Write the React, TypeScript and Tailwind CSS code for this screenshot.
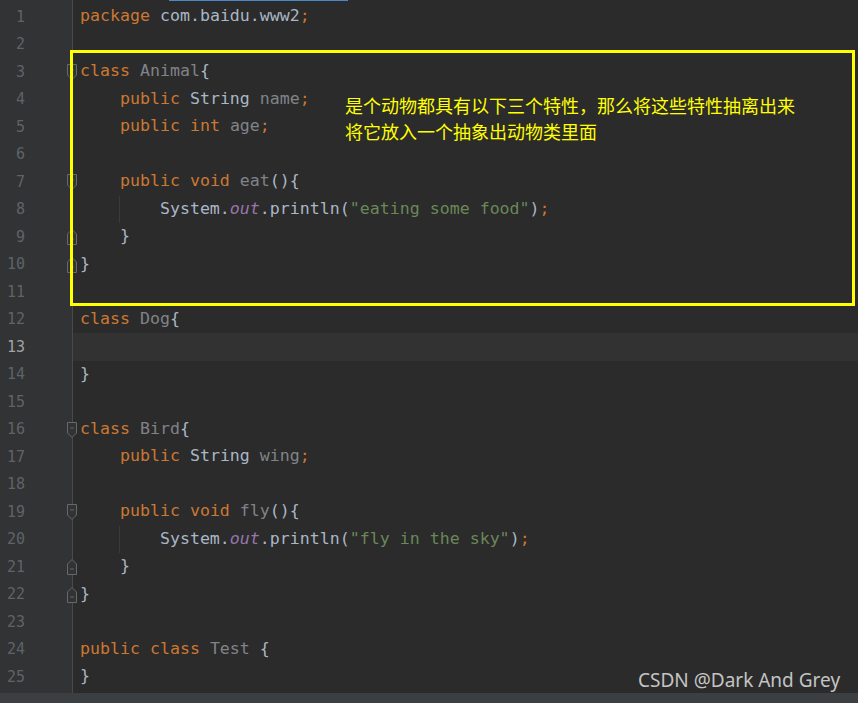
import React from "react";

type Tok = [string, string];

const K = "text-[#cc7832]";
const D = "text-[#a9b7c6]";
const G = "text-[#808389]";
const S = "text-[#6a8759]";
const P = "text-[#9876aa] italic";

interface Line {
  toks: Tok[];
  fold?: "open" | "close";
  guide?: boolean;
}

const lines: Line[] = [
  { toks: [[K, "package "], [D, "com.baidu.www2"], [K, ";"]] },
  { toks: [] },
  { toks: [[K, "class "], [G, "Animal"], [D, "{"]], fold: "open" },
  { toks: [[D, "    "], [K, "public "], [D, "String "], [G, "name"], [K, ";"]] },
  { toks: [[D, "    "], [K, "public int "], [G, "age"], [K, ";"]] },
  { toks: [] },
  { toks: [[D, "    "], [K, "public void "], [G, "eat"], [D, "(){"]], fold: "open" },
  {
    toks: [
      [D, "        System."],
      [P, "out"],
      [D, ".println("],
      [S, '"eating some food"'],
      [D, ")"],
      [K, ";"],
    ],
    guide: true,
  },
  { toks: [[D, "    }"]], fold: "close" },
  { toks: [[D, "}"]], fold: "close" },
  { toks: [] },
  { toks: [[K, "class "], [G, "Dog"], [D, "{"]] },
  { toks: [] },
  { toks: [[D, "}"]] },
  { toks: [] },
  { toks: [[K, "class "], [G, "Bird"], [D, "{"]], fold: "open" },
  { toks: [[D, "    "], [K, "public "], [D, "String "], [G, "wing"], [K, ";"]] },
  { toks: [] },
  { toks: [[D, "    "], [K, "public void "], [G, "fly"], [D, "(){"]], fold: "open" },
  {
    toks: [
      [D, "        System."],
      [P, "out"],
      [D, ".println("],
      [S, '"fly in the sky"'],
      [D, ")"],
      [K, ";"],
    ],
    guide: true,
  },
  { toks: [[D, "    }"]], fold: "close" },
  { toks: [[D, "}"]], fold: "close" },
  { toks: [] },
  { toks: [[K, "public class "], [G, "Test "], [D, "{"]] },
  { toks: [[D, "}"]] },
];

// gutter fold marker, drawn over the gutter border line
function FoldMark({ kind }: { kind: "open" | "close" }) {
  return (
    <svg
      width="12"
      height="18"
      viewBox="0 0 12 18"
      className="absolute left-[66px] top-[5px]"
    >
      {kind === "open" ? (
        <>
          <path d="M1.5 1.5H10.5V12L6 16.5L1.5 12Z" fill="#313335" stroke="#65686c" />
          <path d="M4 7H8" stroke="#65686c" />
        </>
      ) : (
        <>
          <path d="M1.5 16.5H10.5V6L6 1.5L1.5 6Z" fill="#313335" stroke="#65686c" />
          <path d="M4 11H8" stroke="#65686c" />
        </>
      )}
    </svg>
  );
}

export default function App() {
  const mono = { fontFamily: '"DejaVu Sans Mono", "Liberation Mono", monospace' };
  return (
    <div className="relative flex h-[703px] w-[858px] flex-col overflow-hidden bg-[#2b2b2b]">
      <div className="flex flex-1" style={mono}>
        <div className="w-[73px] shrink-0 border-r border-[#4a4a4a] bg-[#313335] pt-[3px]">
          {lines.map((line, i) => (
            <div key={i} className="relative flex h-[27.5px] items-center">
              <span
                className={`w-[25px] text-right text-[15px] ${i === 12 ? "text-[#a4a3a3]" : "text-[#606366]"}`}
              >
                {i + 1}
              </span>
              {line.fold && <FoldMark kind={line.fold} />}
            </div>
          ))}
        </div>
        <div className="flex-1 pt-[3px]">
          {lines.map((line, i) => (
            <div
              key={i}
              className={`flex h-[27.5px] items-center whitespace-pre pl-[7px] text-[16.6px] ${i === 12 ? "bg-[#323232]" : ""}`}
            >
              {line.guide && <span className="h-full w-px bg-[#3a3a3a] ml-[39px] -mr-[40px]" />}
              {line.toks.map(([c, t], j) => (
                <span key={j} className={c}>
                  {t}
                </span>
              ))}
            </div>
          ))}
        </div>
      </div>
      <div className="h-[10px] shrink-0 bg-[#3c3f41]" />

      <div className="absolute left-[169px] top-0 h-px w-[179px] bg-[#4a88c7]" />

      <div className="absolute left-[70px] top-[50px] h-[256px] w-[785px] border-[3px] border-[#ffff00]" />

      <div
        className="absolute left-[345px] top-[92px] text-[18px] leading-[26px] text-[#ffff00]"
        style={{ fontFamily: '"Noto Sans CJK SC", "Noto Sans", sans-serif' }}
      >
        <div>是个动物都具有以下三个特性，那么将这些特性抽离出来</div>
        <div>将它放入一个抽象出动物类里面</div>
      </div>

      <div
        className="absolute left-[638px] top-[666px] text-[19px] leading-[28px] text-[#c4c4c4]"
        style={{ fontFamily: '"Noto Sans", "Open Sans", sans-serif' }}
      >
        CSDN @Dark And Grey
      </div>
    </div>
  );
}
